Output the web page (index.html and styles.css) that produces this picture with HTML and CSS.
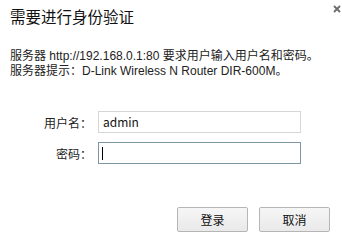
FILE: index.html
```html
<!DOCTYPE html>
<html lang="zh-CN">
<head>
<meta charset="utf-8">
<title>需要进行身份验证</title>
<link rel="stylesheet" href="styles.css">
</head>
<body>
<div class="dialog">
  <div class="title-row">
    <div class="title">需要进行身份验证</div>
    <svg class="close" width="8" height="8" viewBox="0 0 8 8" aria-label="关闭"><path d="M1 1L7 7M7 1L1 7" stroke="#6b6b6b" stroke-width="1.8" fill="none"/></svg>
  </div>
  <div class="message">
    <div>服务器 http://192.168.0.1:80 要求用户输入用户名和密码。</div>
    <div>服务器提示：D-Link Wireless N Router DIR-600M。</div>
  </div>
  <div class="form">
    <div class="label">用户名：</div>
    <div class="field">admin</div>
    <div class="label">密码：</div>
    <div class="field focused"><span class="caret"></span></div>
  </div>
  <div class="buttons">
    <div class="btn">登录</div>
    <div class="btn">取消</div>
  </div>
</div>
</body>
</html>
```
FILE: styles.css
```css
html, body {
  margin: 0;
  padding: 0;
  background: #fff;
}
body {
  width: 342px;
  height: 232px;
  overflow: hidden;
  font-family: "Noto Sans CJK SC", "Noto Sans", sans-serif;
  color: #222;
}
.dialog {
  display: flex;
  flex-direction: column;
}
.title-row {
  display: flex;
  justify-content: space-between;
  align-items: flex-start;
  padding: 4px 1px 0 10px;
  height: 24px;
}
.title {
  font-size: 15.5px;
  line-height: 24px;
  color: #111;
}
.close {
  margin-top: 1px;
}
.message {
  margin-top: 21px;
  padding-left: 10px;
  font-family: "Liberation Sans", "Noto Sans CJK SC", sans-serif;
  font-size: 12px;
  line-height: 15px;
  color: #222;
  white-space: nowrap;
}
.form {
  margin-top: 32px;
  display: grid;
  grid-template-columns: 92px 203px;
  column-gap: 6px;
  row-gap: 9px;
  align-items: center;
  font-size: 12px;
}
.label {
  justify-self: end;
  color: #222;
}
.field {
  box-sizing: border-box;
  height: 22px;
  border: 1px solid #d6d6d6;
  padding: 0 4px;
  line-height: 20px;
  font-size: 12px;
  color: #111;
  display: flex;
  align-items: center;
  background: #fff;
}
.field.focused {
  border-color: #7c96a6;
}
.caret {
  display: block;
  width: 1px;
  height: 13px;
  background: #000;
  margin-left: -1px;
}
.buttons {
  margin-top: 43px;
  display: flex;
  justify-content: flex-end;
  gap: 11px;
  padding-right: 12px;
}
.btn {
  box-sizing: border-box;
  width: 71px;
  height: 25px;
  border: 1px solid #b5b5b5;
  border-radius: 2px;
  background: linear-gradient(#f6f6f6, #e9e9e9);
  font-size: 12px;
  line-height: 23px;
  text-align: center;
  color: #111;
}
```
